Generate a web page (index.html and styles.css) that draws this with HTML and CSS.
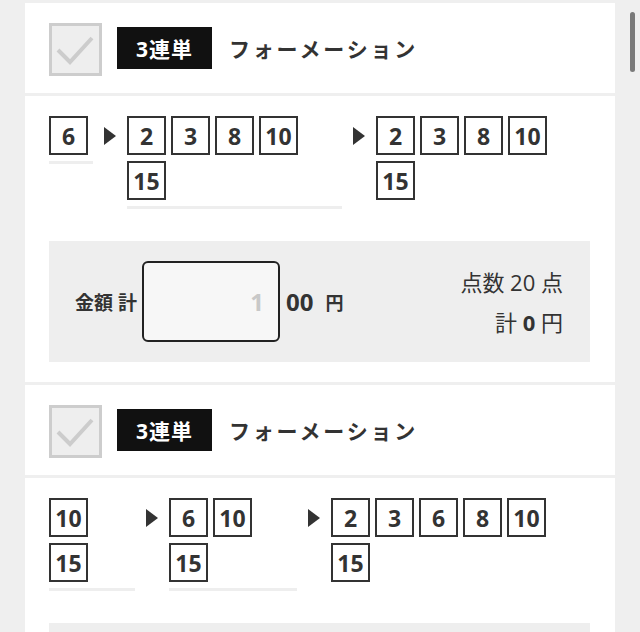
FILE: index.html
```html
<!DOCTYPE html>
<html lang="ja">
<head>
<meta charset="utf-8">
<link rel="stylesheet" href="styles.css">
</head>
<body>
<div class="list">
  <section class="card">
    <div class="card-head">
      <span class="check"><svg viewBox="0 0 47 47" width="47" height="47"><polyline points="6,24 18,36 40,12" fill="none" stroke="#cccccc" stroke-width="4"/></svg></span>
      <span class="badge">3連単</span>
      <span class="kind">フォーメーション</span>
    </div>
    <div class="card-body">
      <div class="picks">
        <div class="group w44"><span class="num">6</span></div>
        <div class="arrow"></div>
        <div class="group w215"><span class="num">2</span><span class="num">3</span><span class="num">8</span><span class="num">10</span><span class="num">15</span></div>
        <div class="arrow"></div>
        <div class="group last"><span class="num">2</span><span class="num">3</span><span class="num">8</span><span class="num">10</span><span class="num">15</span></div>
      </div>
      <div class="summary">
        <div class="amount">
          <span class="label">金額 計</span>
          <span class="input">1</span>
          <span class="zeros">00</span>
          <span class="yen">円</span>
        </div>
        <div class="totals">
          <div>点数 20 点</div>
          <div>計 <b>0</b> 円</div>
        </div>
      </div>
    </div>
  </section>
  <section class="card">
    <div class="card-head">
      <span class="check"><svg viewBox="0 0 47 47" width="47" height="47"><polyline points="6,24 18,36 40,12" fill="none" stroke="#cccccc" stroke-width="4"/></svg></span>
      <span class="badge">3連単</span>
      <span class="kind">フォーメーション</span>
    </div>
    <div class="card-body">
      <div class="picks">
        <div class="group w86"><span class="num">10</span><span class="num">15</span></div>
        <div class="arrow"></div>
        <div class="group w128"><span class="num">6</span><span class="num">10</span><span class="num">15</span></div>
        <div class="arrow"></div>
        <div class="group last"><span class="num">2</span><span class="num">3</span><span class="num">6</span><span class="num">8</span><span class="num">10</span><span class="num">15</span></div>
      </div>
      <div class="summary"></div>
    </div>
  </section>
</div>
<div class="scrollbar"></div>
</body>
</html>
```
FILE: styles.css
```css
html, body {
  margin: 0;
  padding: 0;
}
body {
  background: #efefef;
  font-family: "Open Sans", "Noto Sans CJK JP", sans-serif;
  color: #333333;
  padding-top: 3px;
  overflow: hidden;
}
.list {
  width: 590px;
  margin-left: 25px;
  display: flex;
  flex-direction: column;
  gap: 3px;
}
.card {
  display: flex;
  flex-direction: column;
  gap: 3px;
}
.card-head {
  background: #ffffff;
  height: 90px;
  display: flex;
  align-items: center;
  padding-left: 24px;
}
.check {
  width: 47px;
  height: 47px;
  border: 3px solid #cdcdcd;
  background: #eeeeee;
  display: block;
  margin-top: 2px;
}
.check svg {
  display: block;
}
.badge {
  margin-left: 15px;
  width: 95px;
  height: 42px;
  background: #111111;
  color: #ffffff;
  font-weight: bold;
  font-size: 21px;
  letter-spacing: 1px;
  display: flex;
  align-items: center;
  justify-content: center;
}
.kind {
  margin-left: 17px;
  font-weight: bold;
  font-size: 21px;
  letter-spacing: 2.8px;
  color: #333333;
}
.card-body {
  background: #ffffff;
  padding: 20px 25px 20px 24px;
}
.picks {
  display: flex;
  align-items: flex-start;
}
.group {
  display: flex;
  flex-wrap: wrap;
  border-bottom: 3px solid #eeeeee;
  flex: none;
}
.group.last {
  flex: 1;
  border-bottom-color: transparent;
}
.w44 { width: 44px; }
.w86 { width: 86px; }
.w128 { width: 128px; }
.w215 { width: 215px; }
.num {
  box-sizing: border-box;
  width: 39px;
  height: 39px;
  border: 2px solid #333333;
  margin: 0 5px 6px 0;
  display: flex;
  align-items: center;
  justify-content: center;
  font-weight: bold;
  font-size: 23px;
  color: #333333;
}
.arrow {
  width: 34px;
  height: 39px;
  flex: none;
  display: flex;
  align-items: center;
  justify-content: center;
}
.arrow::before {
  content: "";
  width: 0;
  height: 0;
  border-top: 9px solid transparent;
  border-bottom: 9px solid transparent;
  border-left: 12px solid #333333;
}
.summary {
  margin-top: 32px;
  background: #eeeeee;
  height: 121px;
  display: flex;
  align-items: center;
  justify-content: space-between;
  padding: 0 27px 0 26px;
}
.amount {
  display: flex;
  align-items: center;
}
.label {
  font-weight: bold;
  font-size: 19px;
  margin-right: 5px;
}
.input {
  box-sizing: border-box;
  width: 138px;
  height: 81px;
  border: 2px solid #222222;
  border-radius: 6px;
  background: #f7f7f7;
  display: flex;
  align-items: center;
  justify-content: flex-end;
  padding-right: 14px;
  font-weight: bold;
  font-size: 24px;
  color: #c8c8c8;
}
.zeros {
  margin-left: 6px;
  font-weight: bold;
  font-size: 24px;
}
.yen {
  margin-left: 12px;
  font-weight: bold;
  font-size: 18px;
}
.totals {
  display: flex;
  flex-direction: column;
  align-items: flex-end;
  font-size: 22px;
  line-height: 40px;
  color: #333333;
}
.totals b {
  font-weight: bold;
}
.scrollbar {
  position: fixed;
  left: 630px;
  top: 12px;
  width: 5px;
  height: 60px;
  border-radius: 3px;
  background: #7a7a7a;
}
```
